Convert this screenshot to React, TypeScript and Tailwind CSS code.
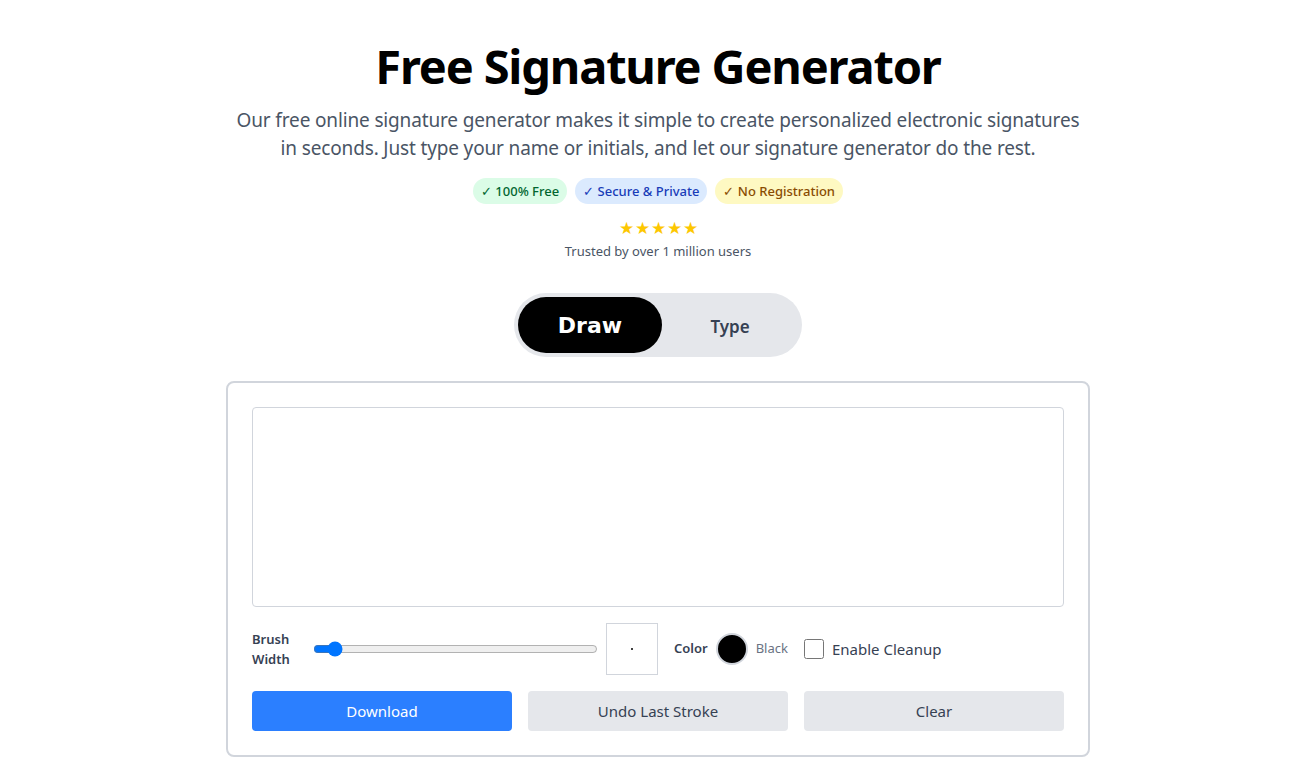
import { useState } from "react";

function Badge({ label, className }: { label: string; className: string }) {
  return (
    <span className={`rounded-full px-2 py-[3px] text-[13px] leading-5 font-medium ${className}`}>
      ✓ {label}
    </span>
  );
}

export default function App() {
  const [mode, setMode] = useState<"draw" | "type">("draw");
  const [brush, setBrush] = useState(2);
  const [cleanup, setCleanup] = useState(false);

  return (
    <div className="min-h-screen bg-white pl-[21px] font-['Noto_Sans',sans-serif] text-gray-900">
      <div className="flex flex-col items-center pt-[43px]">
        <h1 className="text-[47px] leading-none font-bold tracking-tight text-black">Free Signature Generator</h1>
        <p className="mt-4 max-w-[860px] text-center text-[19px] leading-7 tracking-[-0.15px] text-gray-600">
          Our free online signature generator makes it simple to create personalized electronic signatures
          in seconds. Just type your name or initials, and let our signature generator do the rest.
        </p>

        <div className="mt-4 flex gap-2">
          <Badge label="100% Free" className="bg-green-100 text-green-800" />
          <Badge label="Secure & Private" className="bg-blue-100 text-blue-800" />
          <Badge label="No Registration" className="bg-yellow-100 text-yellow-800" />
        </div>

        <div className="mt-4 flex gap-[1px] text-[17px] leading-4 text-yellow-400">
          <span>★</span>
          <span>★</span>
          <span>★</span>
          <span>★</span>
          <span>★</span>
        </div>
        <p className="mt-[5px] text-[13px] leading-5 text-gray-600">Trusted by over 1 million users</p>

        <div className="mt-8 flex h-16 w-[288px] items-center rounded-full bg-gray-200 p-1">
          <button
            onClick={() => setMode("draw")}
            className={`h-14 w-36 rounded-full text-[22px] font-bold font-['Comic_Sans_MS','DejaVu_Sans',sans-serif] ${mode === "draw" ? "bg-black text-white" : "text-gray-700"}`}
          >
            Draw
          </button>
          <button
            onClick={() => setMode("type")}
            className={`h-14 flex-1 rounded-full pt-1 text-[17px] font-semibold ${mode === "type" ? "bg-black text-white" : "text-gray-700"}`}
          >
            Type
          </button>
        </div>

        <div className="mt-6 w-[864px] rounded-lg border-2 border-gray-300 bg-white p-6">
          <div className="h-[200px] w-full rounded border border-gray-300 bg-white" />

          <div className="mt-4 flex items-center">
            <span className="w-[53px] text-[13px] leading-5 font-semibold text-gray-700">Brush Width</span>
            <input
              type="range"
              min={1}
              max={20}
              value={brush}
              onChange={(e) => setBrush(Number(e.target.value))}
              className="ml-2 w-[285px]"
            />
            <div className="ml-2 flex h-[52px] w-[52px] items-center justify-center border border-gray-300">
              <span className="block h-[2px] w-[2px] rounded-full bg-black" />
            </div>

            <span className="ml-4 text-[13px] font-semibold text-gray-700">Color</span>
            <span className="ml-2 block h-8 w-8 rounded-full border-2 border-gray-300 bg-black" />
            <span className="ml-2 text-[13px] text-gray-500">Black</span>

            <label className="ml-4 flex items-center gap-2 text-[15px] text-gray-700">
              <input
                type="checkbox"
                checked={cleanup}
                onChange={() => setCleanup((c) => !c)}
                className="m-0 h-5 w-5"
              />
              Enable Cleanup
            </label>
          </div>

          <div className="mt-4 grid grid-cols-3 gap-4">
            <button className="h-10 rounded bg-blue-500 text-[15px] text-white">Download</button>
            <button className="h-10 rounded bg-gray-200 text-[15px] text-gray-700">Undo Last Stroke</button>
            <button className="h-10 rounded bg-gray-200 text-[15px] text-gray-700">Clear</button>
          </div>
        </div>
      </div>
    </div>
  );
}
